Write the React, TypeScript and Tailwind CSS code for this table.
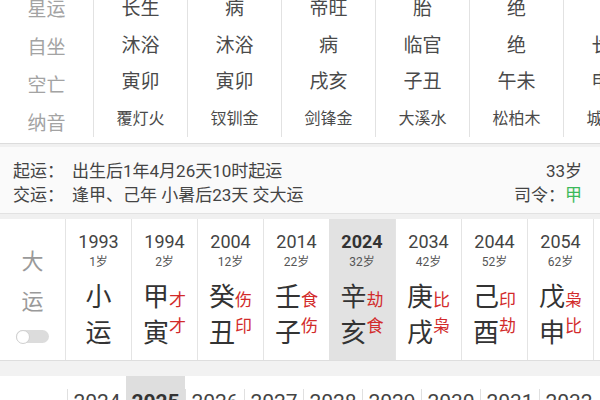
import { Fragment } from "react";

const LABELS = ["星运", "自坐", "空亡", "纳音"];

const PILLARS = [
  ["长生", "沐浴", "寅卯", "覆灯火"],
  ["病", "沐浴", "寅卯", "钗钏金"],
  ["帝旺", "病", "戌亥", "剑锋金"],
  ["胎", "临官", "子丑", "大溪水"],
  ["绝", "绝", "午未", "松柏木"],
  ["", "长生", "申酉", "城头土"],
];

type Yun = { year: string; age: string; gan: string; gs?: string; zhi: string; zs?: string; on?: boolean };

const DAYUN: Yun[] = [
  { year: "1993", age: "1岁", gan: "小", zhi: "运" },
  { year: "1994", age: "2岁", gan: "甲", gs: "才", zhi: "寅", zs: "才" },
  { year: "2004", age: "12岁", gan: "癸", gs: "伤", zhi: "丑", zs: "印" },
  { year: "2014", age: "22岁", gan: "壬", gs: "食", zhi: "子", zs: "伤" },
  { year: "2024", age: "32岁", gan: "辛", gs: "劫", zhi: "亥", zs: "食", on: true },
  { year: "2034", age: "42岁", gan: "庚", gs: "比", zhi: "戌", zs: "枭" },
  { year: "2044", age: "52岁", gan: "己", gs: "印", zhi: "酉", zs: "劫" },
  { year: "2054", age: "62岁", gan: "戊", gs: "枭", zhi: "申", zs: "比" },
];

const LIUNIAN = ["2024", "2025", "2026", "2027", "2028", "2029", "2030", "2031", "2032"];

export default function App() {
  return (
    <div className="relative h-[400px] w-[600px] overflow-hidden bg-white font-['Roboto','Noto_Sans_CJK_SC',sans-serif]">
      {/* 星运 / 自坐 / 空亡 / 纳音 */}
      <div className="-mt-[9px] flex h-[152px]">
        <div className="flex w-[93px] shrink-0 flex-col">
          {LABELS.map((l) => (
            <div key={l} className="flex h-[38px] items-center justify-center text-[19px] text-[#a3a3a3]">
              {l}
            </div>
          ))}
        </div>
        {PILLARS.map((col, i) => (
          <div key={i} className="flex h-[146px] w-[94px] shrink-0 flex-col border-l border-[#e2e2e2]">
            {col.map((v, j) => (
              <div
                key={j}
                className={`flex h-[38px] items-center justify-center whitespace-nowrap text-[#4a4a4a] ${j === 3 ? "text-[16px]" : "text-[19px]"}`}
              >
                {v}
              </div>
            ))}
          </div>
        ))}
      </div>

      <div className="h-[4px] border-t border-[#dcdcdc] bg-[#f0f0f0]" />

      {/* 起运 / 交运 */}
      <div className="flex h-[66px] items-start justify-between bg-[#fafafa] pl-[13px] pr-[18px] pt-[12px] text-[17px] leading-[24px] text-[#444]">
        <div className="whitespace-nowrap">
          <div>
            <span className="inline-block w-[59px]">起运：</span>出生后1年4月26天10时起运
          </div>
          <div>
            <span className="inline-block w-[59px]">交运：</span>逢甲、己年 小暑后23天 交大运
          </div>
        </div>
        <div className="whitespace-nowrap text-right">
          <div>33岁</div>
          <div>
            司令：<span className="text-[#3cb95a]">甲</span>
          </div>
        </div>
      </div>

      <div className="h-[6px] border-t border-[#e2e2e2] bg-[#f0f0f0]" />

      {/* 大运 */}
      <div className="flex h-[141px]">
        <div className="flex w-[65px] shrink-0 flex-col items-center pt-[23px] text-[22px] leading-[40px] text-[#9a9a9a]">
          <div>大</div>
          <div>运</div>
          <div className="mt-[8px] flex h-[13px] w-[33px] items-center rounded-full bg-[#dcdcdc]">
            <div className="h-[14px] w-[14px] rounded-full border border-[#d0d0d0] bg-white" />
          </div>
        </div>
        {DAYUN.map((d) => (
          <div
            key={d.year}
            className={`flex w-[66px] shrink-0 flex-col items-center pt-[12px] ${d.on ? "bg-[#e2e2e2]" : "border-l border-[#e4e4e4]"}`}
          >
            <div className={`text-[18px] leading-[22px] ${d.on ? "font-bold text-[#333]" : "text-[#444]"}`}>{d.year}</div>
            <div className="text-[12px] leading-[18px] text-[#555]">{d.age}</div>
            <div className="mt-[6px] flex h-[36px] items-end leading-[36px]">
              <span className="text-[26px] leading-[32px] text-[#333]">{d.gan}</span>
              {d.gs && <span className="mb-[3px] text-[17px] leading-[19px] text-[#d22b2b]">{d.gs}</span>}
            </div>
            <div className="flex h-[40px] items-start">
              <span className="mt-[4px] text-[26px] leading-[32px] text-[#333]">{d.zhi}</span>
              {d.zs && <span className="mt-[4px] text-[17px] leading-[19px] text-[#d22b2b]">{d.zs}</span>}
            </div>
          </div>
        ))}
        <div className="w-[66px] shrink-0 border-l border-[#e4e4e4]" />
      </div>

      <div className="h-[16px] border-t border-[#dedede] bg-[#f2f2f2]" />

      {/* 流年 */}
      <div className="flex h-[40px] pl-[67px]">
        {LIUNIAN.map((y) => (
          <Fragment key={y}>
            <div
              className={`flex w-[59px] shrink-0 justify-center pt-[13px] text-[21px] leading-[26px] ${
                y === "2025" ? "bg-[#dedede] font-bold text-[#333]" : "text-[#444]"
              }`}
            >
              <div className={`w-full text-center ${y === "2025" ? "" : "border-l border-[#e0e0e0]"}`}>{y}</div>
            </div>
          </Fragment>
        ))}
      </div>
    </div>
  );
}
